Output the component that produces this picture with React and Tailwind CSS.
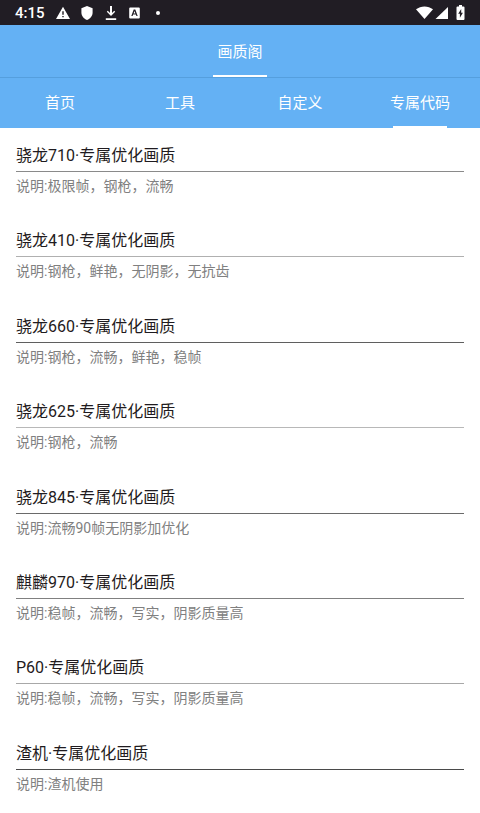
const topTabs = ["首页", "工具", "自定义", "专属代码"];

const items = [
  { title: "骁龙710·专属优化画质", desc: "说明:极限帧，钢枪，流畅", line: "bg-[#8a8a8a]" },
  { title: "骁龙410·专属优化画质", desc: "说明:钢枪，鲜艳，无阴影，无抗齿", line: "bg-[#b0b0b0]" },
  { title: "骁龙660·专属优化画质", desc: "说明:钢枪，流畅，鲜艳，稳帧", line: "bg-[#5f5f5f]" },
  { title: "骁龙625·专属优化画质", desc: "说明:钢枪，流畅", line: "bg-[#b8b8b8]" },
  { title: "骁龙845·专属优化画质", desc: "说明:流畅90帧无阴影加优化", line: "bg-[#6a6a6a]" },
  { title: "麒麟970·专属优化画质", desc: "说明:稳帧，流畅，写实，阴影质量高", line: "bg-[#808080]" },
  { title: "P60·专属优化画质", desc: "说明:稳帧，流畅，写实，阴影质量高", line: "bg-[#a8a8a8]" },
  { title: "渣机·专属优化画质", desc: "说明:渣机使用", line: "bg-[#4a4a4a]" },
];

function StatusBar() {
  return (
    <div className="flex h-[25px] items-center justify-between bg-[#211d24] px-[15px] text-white">
      <div className="flex items-center">
        <span className="w-[41px] pt-[2px] text-[15px] leading-[23px] font-medium">4:15</span>
        <svg className="h-[14px] w-[14px]" viewBox="0 0 14 14" fill="currentColor">
          <path fillRule="evenodd" d="M7 .8 14 13H0zM6.3 5.2v3.6h1.4V5.2zm0 4.7v1.4h1.4V9.9z" />
        </svg>
        <svg className="ml-[11px] h-[14px] w-[12px]" viewBox="0 0 12 14" fill="currentColor">
          <path d="M6 0l5.600 2.200v4.300c0 3.400-2.300 6.300-5.600 7.500C2.700 12.800.4 9.900.4 6.500V2.200z" />
        </svg>
        <svg className="ml-3 h-[14px] w-[12px]" viewBox="0 0 12 14" fill="currentColor">
          <path d="M5 0h2v7l2.200-2.300 1 1.100L6 10 1.800 5.800l1-1.100L5 7zM.8 12.200h10.400V14H.8z" />
        </svg>
        <svg className="ml-3 h-[12px] w-[11px]" viewBox="0 0 11 12" fill="currentColor">
          <path
            fillRule="evenodd"
            d="M1.200.5h8.600q1 0 1 1v9q0 1-1 1H1.200q-1 0-1-1v-9q0-1 1-1zM4.700 2.500 2.300 9h1.300l.5-1.500h2.800L7.400 9h1.300L6.300 2.500zM5.500 4.100l.9 2.300H4.600z"
          />
        </svg>
        <span className="ml-4 h-1 w-1 rounded-full bg-white" />
      </div>
      <div className="flex items-center">
        <svg className="h-[13px] w-[17px]" viewBox="0 0 17 13" fill="currentColor">
          <path d="M0 3.300C4.800-.6 12.200-.6 17 3.300L8.500 13z" />
        </svg>
        <svg className="ml-[2px] h-[12px] w-[13px]" viewBox="0 0 13 12" fill="currentColor">
          <path d="M13 0v12H.5z" />
        </svg>
        <svg className="ml-2 h-[15px] w-[9px]" viewBox="0 0 9 15" fill="currentColor">
          <path
            fillRule="evenodd"
            d="M3 0h3v1.500h1.500q1 0 1 1V14q0 1-1 1h-6q-1 0-1-1V2.500q0-1 1-1H3zM5.200 4 2.200 8.700h1.700v4l3-5H5.200z"
          />
        </svg>
      </div>
    </div>
  );
}

function Tab({ label, active }) {
  return (
    <button type="button" className="flex flex-col items-center text-[15px] leading-5">
      <span className="flex flex-1 items-center">{label}</span>
      <span className={active ? "-mt-[2px] h-[2px] w-[54px] bg-white" : "-mt-[2px] h-[2px] w-[54px]"} />
    </button>
  );
}

export default function App() {
  return (
    <div className="flex min-h-screen flex-col bg-white font-[Roboto,'Noto_Sans_CJK_SC',sans-serif]">
      <StatusBar />
      <header className="bg-[#64b1f4] text-white">
        <nav className="grid h-[53px] grid-cols-1 border-b border-[#559fde] pt-px">
          <Tab label="画质阁" active />
        </nav>
        <nav className="grid h-[50px] grid-cols-4">
          {topTabs.map((label) => (
            <Tab key={label} label={label} active={label === "专属代码"} />
          ))}
        </nav>
      </header>
      <main className="grid flex-1 auto-rows-fr px-4 pb-0.5">
        {items.map((item) => (
          <section key={item.title} className="pt-4">
            <h2 className="text-[16px] leading-6 text-[#1f1b20]">{item.title}</h2>
            <div className={`mt-[3px] mb-1 h-px ${item.line}`} />
            <p className="text-[14px] leading-5 text-[#808080]">{item.desc}</p>
          </section>
        ))}
      </main>
    </div>
  );
}
